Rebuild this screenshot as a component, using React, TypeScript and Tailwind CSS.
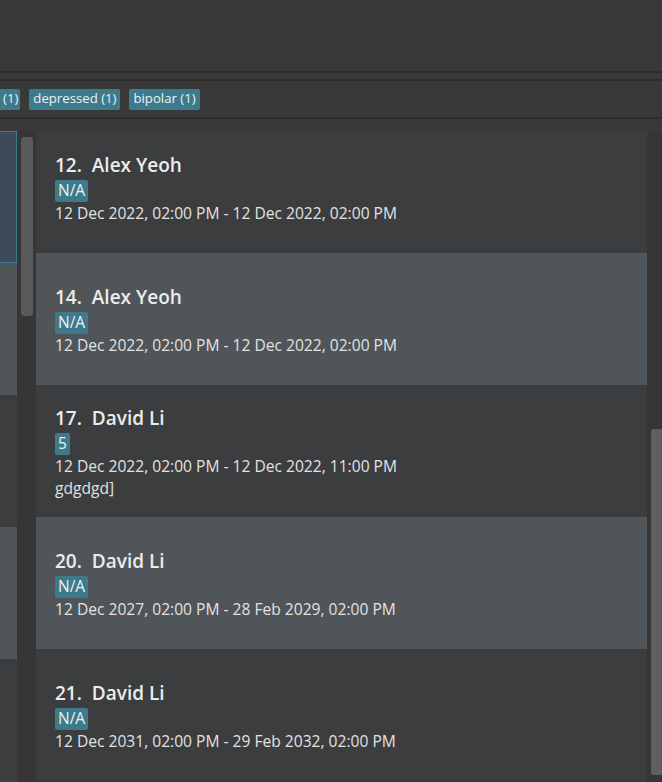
const topTags = [
  { label: "(1)", cut: true },
  { label: "depressed (1)" },
  { label: "bipolar (1)" },
];

const sessions = [
  { no: 12, name: "Alex Yeoh", tag: "N/A", range: "12 Dec 2022, 02:00 PM - 12 Dec 2022, 02:00 PM" },
  { no: 14, name: "Alex Yeoh", tag: "N/A", range: "12 Dec 2022, 02:00 PM - 12 Dec 2022, 02:00 PM" },
  { no: 17, name: "David Li", tag: "5", range: "12 Dec 2022, 02:00 PM - 12 Dec 2022, 11:00 PM", note: "gdgdgd]" },
  { no: 20, name: "David Li", tag: "N/A", range: "12 Dec 2027, 02:00 PM - 28 Feb 2029, 02:00 PM" },
  { no: 21, name: "David Li", tag: "N/A", range: "12 Dec 2031, 02:00 PM - 29 Feb 2032, 02:00 PM" },
];

const leftRows = ["selected", "light", "dark", "light", "dark"];

function Tag({ text }: { text: string }) {
  return (
    <span className="inline-flex h-[22px] items-center rounded-[2px] bg-[#3d7a8c] px-[3px] text-[15.5px] text-[#eef2f3]">
      {text}
    </span>
  );
}

export default function App() {
  return (
    <div className="flex h-[782px] w-[662px] flex-col overflow-hidden bg-[#393939] font-['Open_Sans',sans-serif]">
      <div className="h-[71px]" />
      <div className="h-[2px] bg-[#2c2c2c]" />
      <div className="h-[6px]" />
      <div className="h-[2px] bg-[#2c2c2c]" />
      <div className="flex h-[36px] items-center gap-[9px]">
        {topTags.map((t) => (
          <span
            key={t.label}
            className={`inline-flex h-[21px] items-center bg-[#3d7a8c] text-[13.2px] text-[#eef2f3] ${
              t.cut ? "rounded-r-[2px] pl-[3px] pr-[2px]" : "rounded-[2px] px-[4px]"
            }`}
          >
            {t.label}
          </span>
        ))}
      </div>
      <div className="h-[2px] bg-[#2c2c2c]" />

      <div className="flex min-h-0 flex-1 pt-[12px]">
        {/* left list, mostly hidden */}
        <div className="flex w-[17px] flex-col overflow-hidden">
          {leftRows.map((r, i) => (
            <div
              key={i}
              className={`h-[132px] shrink-0 ${
                r === "selected"
                  ? "border border-l-0 border-[#3a7d92] bg-[#3d4a5b]"
                  : r === "light"
                  ? "bg-[#4f5558]"
                  : "bg-[#3c3d3f]"
              }`}
            />
          ))}
        </div>
        <div className="w-[19px] bg-[#363636] pl-[4px] pt-[6px]">
          <div className="h-[179px] w-[12px] rounded-[4px] bg-[#5b5b5b]" />
        </div>

        {/* session list */}
        <div className="w-[611px] overflow-hidden">
          <div className="-mt-[10px] flex flex-col">
            {sessions.map((s, i) => (
              <div
                key={s.no}
                className={`flex h-[132px] shrink-0 flex-col justify-center pl-[19px] pt-[3px] ${
                  i % 2 === 0 ? "bg-[#3c3d3f]" : "bg-[#4f5558]"
                }`}
              >
                <div className="whitespace-pre text-[19px] font-semibold leading-[24px] text-[#ececec]">
                  {`${s.no}.  ${s.name}`}
                </div>
                <div className="mt-[3px] flex">
                  <Tag text={s.tag} />
                </div>
                <div className="text-[15.6px] leading-[22px] text-[#e2e2e2]">{s.range}</div>
                {s.note && <div className="text-[15.6px] leading-[22px] text-[#e2e2e2]">{s.note}</div>}
              </div>
            ))}
          </div>
        </div>

        <div className="w-[15px] bg-[#363636] pl-[4px] pt-[298px]">
          <div className="h-[346px] w-[12px] rounded-[3px] bg-[#5f5f5f]" />
        </div>
      </div>
    </div>
  );
}
